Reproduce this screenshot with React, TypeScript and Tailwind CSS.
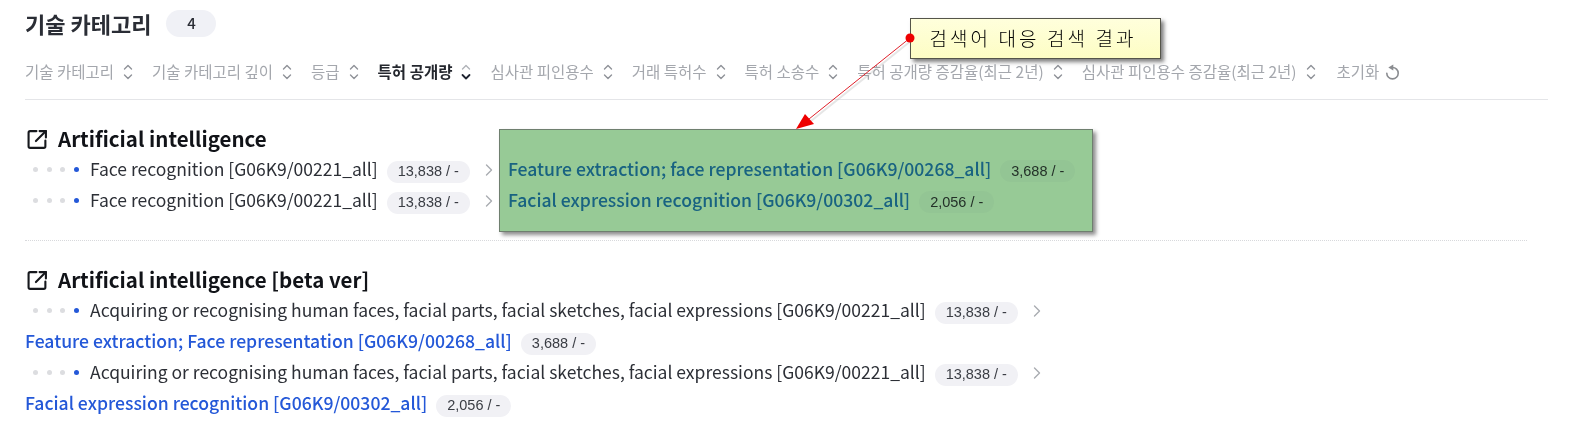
import { ReactNode } from 'react'

const filters = [
  { label: '기술 카테고리' },
  { label: '기술 카테고리 깊이' },
  { label: '등급' },
  { label: '특허 공개량', active: true },
  { label: '심사관 피인용수' },
  { label: '거래 특허수' },
  { label: '특허 소송수' },
  { label: '특허 공개량 증감율(최근 2년)' },
  { label: '심사관 피인용수 증감율(최근 2년)' },
]

function SortIcon({ active }: { active?: boolean }) {
  return (
    <svg width="10" height="16" viewBox="0 0 10 16" fill="none" strokeLinecap="round" strokeLinejoin="round" strokeWidth="1.4" className={active ? 'text-[#b0b3b8]' : 'text-[#8f9298]'}>
      <path d="M1.5 5 5 1.5 8.5 5" stroke="currentColor" />
      <path d="M1.5 11 5 14.5 8.5 11" stroke={active ? '#1f2430' : 'currentColor'} strokeWidth={active ? 1.8 : 1.4} />
    </svg>
  )
}

function LinkIcon() {
  return (
    <svg width="21" height="21" viewBox="0 0 20 20" fill="none" stroke="#16181d" strokeWidth="2" strokeLinecap="round" strokeLinejoin="round" className="shrink-0">
      <path d="M9 2H3a1.5 1.5 0 0 0-1.5 1.5v13A1.5 1.5 0 0 0 3 18h13a1.5 1.5 0 0 0 1.500-1.500V11" />
      <path d="M12 2h6v6" />
      <path d="M18 2 8.500 11.500" />
    </svg>
  )
}

function Dots() {
  return (
    <div className="flex w-[65px] shrink-0 items-center gap-[8.500px] pl-[8px]">
      <span className="h-[5px] w-[5px] rounded-full bg-[#dcdde0]" />
      <span className="h-[5px] w-[5px] rounded-full bg-[#dcdde0]" />
      <span className="h-[5px] w-[5px] rounded-full bg-[#dcdde0]" />
      <span className="h-[5px] w-[5px] rounded-full bg-[#2458d8]" />
    </div>
  )
}

function Chip({ children, light }: { children: ReactNode; light?: boolean }) {
  return (
    <span className={`ml-[9px] mt-[4px] flex h-[22px] shrink-0 items-center rounded-full px-[11px] font-['Liberation_Sans',sans-serif] text-[14.500px] font-normal text-[#3a3d44] ${light ? 'bg-[#f9f9fb]' : 'bg-[#f1f1f5]'}`}>
      {children}
    </span>
  )
}

function Chevron() {
  return (
    <svg width="8" height="12" viewBox="0 0 8 12" fill="none" stroke="#a9acb1" strokeWidth="1.4" strokeLinecap="round" strokeLinejoin="round" className="ml-[15px] shrink-0">
      <path d="M1.500 1 6.500 6 1.500 11" />
    </svg>
  )
}

function SectionTitle({ children }: { children: ReactNode }) {
  return (
    <div className="flex h-[30px] items-center gap-[10px] pl-[2px] text-[20.500px] font-bold leading-none text-[#111318]">
      <LinkIcon />
      <span className="-translate-y-px">{children}</span>
    </div>
  )
}

function TreeRow({ text, count, children }: { text: string; count: string; children?: ReactNode }) {
  return (
    <div className="flex h-[31px] items-center text-[17.500px] text-[#2c2f36]">
      <Dots />
      <span className="whitespace-nowrap">{text}</span>
      <Chip>{count}</Chip>
      <Chevron />
      {children}
    </div>
  )
}

function LinkRow({ text, count }: { text: string; count: string }) {
  return (
    <div className="flex h-[31px] items-center text-[17.600px] font-medium text-[#2458d8]">
      <span className="whitespace-nowrap">{text}</span>
      <Chip>{count}</Chip>
    </div>
  )
}

function InlineLink({ text, count }: { text: string; count: string }) {
  return (
    <div className="ml-[15px] flex items-center text-[17.600px] font-medium text-[#2a7ddc]">
      <span className="whitespace-nowrap">{text}</span>
      <Chip light>{count}</Chip>
    </div>
  )
}

export default function App() {
  return (
    <div className="relative h-[423px] w-[1577px] overflow-hidden bg-white font-['Noto_Sans_CJK_KR',sans-serif]">
      <div className="pl-[25px] pr-[29px] pt-[8px]">
        <div className="flex h-[30px] items-center">
          <h2 className="text-[22px] font-bold leading-none text-[#2a2d35]">기술 카테고리</h2>
          <span className="ml-[15px] flex h-[27px] w-[50px] items-center justify-center rounded-full bg-[#f0f1f6] text-[15px] font-medium text-[#2a2d35]">
            4
          </span>
        </div>

        {/* Filter bar */}
        <div className="mt-[19px] flex h-[43px] items-start gap-[19px] border-b border-[#e4e5e8] pt-[3px] text-[15.500px] text-[#a4a7ad]">
          {filters.map(f => (
            <div key={f.label} className={`flex h-[24px] items-center gap-[9px] whitespace-nowrap ${f.active ? 'font-bold text-[#24272e]' : ''}`}>
              <span>{f.label}</span>
              <SortIcon active={f.active} />
            </div>
          ))}
          <div className="ml-[2px] flex h-[24px] items-center gap-[6px] whitespace-nowrap">
            <span>초기화</span>
            <svg width="15" height="17" viewBox="0 0 15 17" fill="none">
              <path d="M7.500 3.500A5.700 5.700 0 1 1 1.800 9.200" stroke="#8a8c90" strokeWidth="1.600" strokeLinecap="round" />
              <path d="M3.300 3.500 8.300 0.500V6.500Z" fill="#8a8c90" />
            </svg>
          </div>
        </div>

        {/* Artificial intelligence */}
        <div className="mr-[21px] mt-[24px] h-[117px] border-b border-dotted border-[#d8d9dc]">
          <SectionTitle>Artificial intelligence</SectionTitle>
          <TreeRow text="Face recognition [G06K9/00221_all]" count="13,838 / -">
            <InlineLink text="Feature extraction; face representation [G06K9/00268_all]" count="3,688 / -" />
          </TreeRow>
          <TreeRow text="Face recognition [G06K9/00221_all]" count="13,838 / -">
            <InlineLink text="Facial expression recognition [G06K9/00302_all]" count="2,056 / -" />
          </TreeRow>
        </div>

        {/* Artificial intelligence [beta ver] */}
        <div className="mt-[24px]">
          <SectionTitle>Artificial intelligence [beta ver]</SectionTitle>
          <TreeRow
            text="Acquiring or recognising human faces, facial parts, facial sketches, facial expressions [G06K9/00221_all]"
            count="13,838 / -"
          />
          <LinkRow text="Feature extraction; Face representation [G06K9/00268_all]" count="3,688 / -" />
          <TreeRow
            text="Acquiring or recognising human faces, facial parts, facial sketches, facial expressions [G06K9/00221_all]"
            count="13,838 / -"
          />
          <LinkRow text="Facial expression recognition [G06K9/00302_all]" count="2,056 / -" />
        </div>
      </div>

      {/* Annotation layer drawn over the page */}
      <div className="absolute left-[499px] top-[129px] h-[103px] w-[594px] border border-[#6f7f6f] bg-[#97ca96] shadow-[3px_3px_4px_rgba(0,0,0,0.45)] mix-blend-multiply" />
      <div className="absolute left-[910px] top-[18px] flex h-[41px] w-[251px] items-center justify-center border border-[#55554a] bg-[#ffffcf] bg-gradient-to-b from-[#ffffdc] to-[#fdfdc4] pr-[5px] text-[19px] font-light tracking-[3.100px] text-black shadow-[3px_3px_4px_rgba(0,0,0,0.5)]">
        검색어 대응 검색 결과
      </div>
      <svg className="absolute left-[780px] top-[25px]" width="140" height="115" viewBox="0 0 140 115" fill="none">
        <path d="M130 13 29 94" stroke="#9a9a9a" strokeOpacity="0.25" strokeWidth="2" transform="translate(2 2)" />
        <path d="M130 13 29 94" stroke="#e0202a" strokeWidth="1" />
        <path d="M16 104 25 89 34 99Z" fill="#ee0000" />
        <circle cx="130" cy="13" r="4.500" fill="#ee0000" />
      </svg>
    </div>
  )
}
